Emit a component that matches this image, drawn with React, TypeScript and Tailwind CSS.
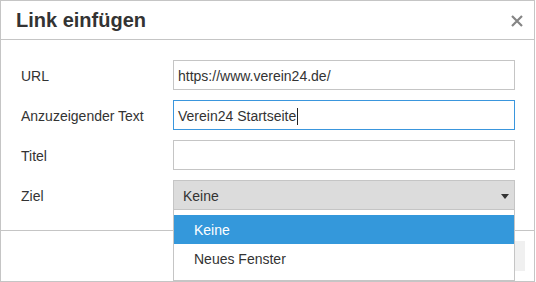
import React from 'react';

const font = { fontFamily: '"Liberation Sans", Arial, sans-serif' };

function Row({ label, children }: { label: string; children: React.ReactNode }) {
  return (
    <div className="flex items-center h-[30px]">
      <div className="w-[152px] text-[14px] text-[#333] pt-[2px]">{label}</div>
      <div className="relative w-[342px] h-[30px]">{children}</div>
    </div>
  );
}

export default function App() {
  return (
    <div style={font} className="w-[535px] h-[282px] bg-white border border-[#c5c5c5] flex flex-col overflow-hidden">
      <div className="h-[39px] shrink-0 border-b border-[#c5c5c5] flex items-center justify-between pl-[15px] pr-[11px]">
        <h1 className="text-[20px] font-bold text-[#333] leading-none">Link einfügen</h1>
        <svg width="12" height="12" viewBox="0 0 12 12" className="mt-[1px]">
          <path d="M1 1 L11 11 M11 1 L1 11" stroke="#858585" strokeWidth="2.2" />
        </svg>
      </div>

      <div className="flex flex-col gap-[10px] pl-[20px] pt-[20px] pb-[20px]">
        <Row label="URL">
          <div className="h-full border border-[#c5c5c5] flex items-center pl-[4px] pt-[2px] text-[14px] text-[#333]">
            https://www.verein24.de/
          </div>
        </Row>
        <Row label="Anzuzeigender Text">
          <div className="h-full border border-[#3a96dd] flex items-center pl-[4px] pt-[2px] text-[14px] text-[#333]">
            Verein24 Startseite
            <span className="w-px h-[17px] bg-[#222] ml-[1px]" />
          </div>
        </Row>
        <Row label="Titel">
          <div className="h-full border border-[#c5c5c5]" />
        </Row>
        <Row label="Ziel">
          <div className="h-full border border-[#c5c5c5] bg-[#dcdcdc] flex items-center justify-between pl-[9px] pr-[5px] pt-[2px] text-[14px] text-[#333]">
            Keine
            <svg width="8" height="5" viewBox="0 0 8 5">
              <path d="M0 0 H8 L4 5 Z" fill="#333" />
            </svg>
          </div>
          <div className="absolute z-10 left-0 top-[29px] w-[342px] bg-white border border-[#c5c5c5] pt-[5px] pb-[7px] text-[14px]">
            <div className="h-[29px] bg-[#3498db] text-white flex items-center pl-[20px] pt-[2px]">Keine</div>
            <div className="h-[29px] text-[#333] flex items-center pl-[20px] pt-[2px]">Neues Fenster</div>
          </div>
        </Row>
      </div>

      <div className="flex-1 border-t border-[#c5c5c5] flex justify-end items-start pt-[10px] pr-[9px]">
        <div className="w-[120px] h-[30px] bg-[#f0f0f0]" />
      </div>
    </div>
  );
}
